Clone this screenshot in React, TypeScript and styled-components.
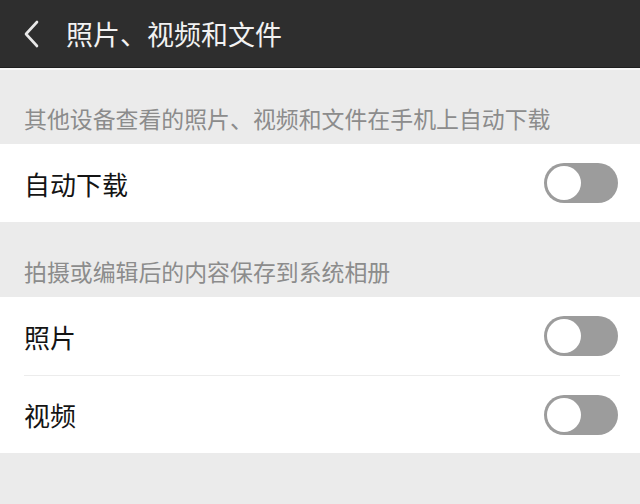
import styled, { createGlobalStyle } from "styled-components";

const GlobalStyle = createGlobalStyle`
    html, body {
        margin: 0;
        padding: 0;
        background: #ebebeb;
        font-family: "Noto Sans CJK SC", "Noto Sans", sans-serif;
    }
`;

const Page = styled.div`
    width: 640px;
    height: 504px;
    background: #ebebeb;
    overflow: hidden;
`;

const TopBar = styled.header`
    height: 67px;
    background: #2e2e2e;
    border-bottom: 1px solid #1f1f1f;
    display: flex;
    align-items: center;
    padding-left: 22px;
    gap: 26px;
    box-shadow: 0 2px 0 #f7f7f7;
`;

const BackButton = styled.svg`
    width: 18px;
    height: 28px;
    flex-shrink: 0;
`;

const Title = styled.h1`
    margin: 0;
    color: #f2f2f2;
    font-size: 27px;
    font-weight: 400;
`;

const SectionLabel = styled.div<{ $top: number }>`
    height: ${(p) => p.$top}px;
    display: flex;
    align-items: flex-end;
    padding: 0 24px 14px;
    box-sizing: border-box;
    color: #8c8c8c;
    font-size: 22.9px;
    line-height: 24px;
`;

const Group = styled.section`
    background: #fff;
`;

const Row = styled.div<{ $divider?: boolean }>`
    height: 78px;
    box-sizing: border-box;
    margin: 0 20px 0 24px;
    padding-right: 2px;
    display: flex;
    align-items: center;
    justify-content: space-between;
    border-top: ${(p) => (p.$divider ? "1px solid #ececec" : "none")};
`;

const Label = styled.span`
    color: #141414;
    font-size: 26px;
    font-weight: 400;
`;

const Toggle = styled.div`
    width: 74px;
    height: 40px;
    border-radius: 20px;
    background: #9c9c9c;
    position: relative;
    flex-shrink: 0;
`;

const Knob = styled.span`
    position: absolute;
    left: 3px;
    top: 3px;
    width: 34px;
    height: 34px;
    border-radius: 50%;
    background: #fff;
`;

function Switch() {
    return (
        <Toggle>
            <Knob />
        </Toggle>
    );
}

export default function App() {
    return (
        <Page>
            <GlobalStyle />
            <TopBar>
                <BackButton viewBox="0 0 18 28">
                    <path d="M15 2 L4 14 L15 26" fill="none" stroke="#e8e8e8" strokeWidth="2.6" strokeLinecap="round" strokeLinejoin="round" />
                </BackButton>
                <Title>照片、视频和文件</Title>
            </TopBar>
            <SectionLabel $top={76}>其他设备查看的照片、视频和文件在手机上自动下载</SectionLabel>
            <Group>
                <Row>
                    <Label>自动下载</Label>
                    <Switch />
                </Row>
            </Group>
            <SectionLabel $top={75}>拍摄或编辑后的内容保存到系统相册</SectionLabel>
            <Group>
                <Row>
                    <Label>照片</Label>
                    <Switch />
                </Row>
                <Row $divider>
                    <Label>视频</Label>
                    <Switch />
                </Row>
            </Group>
        </Page>
    );
}
